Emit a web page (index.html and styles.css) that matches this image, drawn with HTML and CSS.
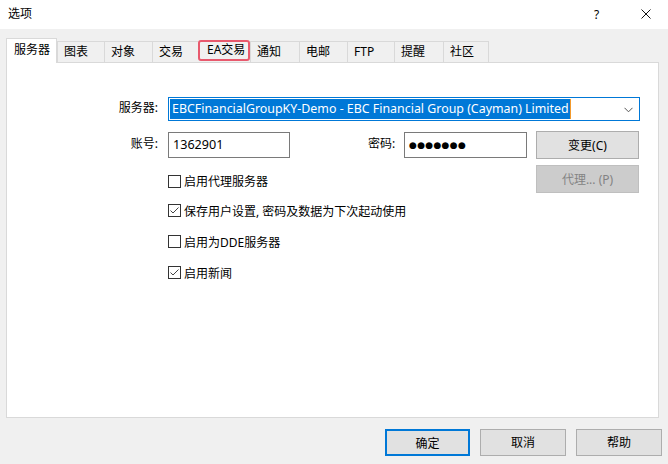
FILE: index.html
```html
<!DOCTYPE html>
<html lang="zh-CN">
<head>
<meta charset="utf-8">
<title>选项</title>
<link rel="stylesheet" href="styles.css">
</head>
<body>
<div class="window">
  <div class="titlebar">
    <span class="title">选项</span>
    <span class="help">?</span>
    <span class="close"><svg width="10" height="10" viewBox="0 0 10 10"><path d="M0.5 0.5 L9.5 9.5 M9.5 0.5 L0.5 9.5" stroke="#111" stroke-width="1" fill="none"/></svg></span>
  </div>
  <div class="tabs">
    <div class="tab tab-active t1">服务器</div>
    <div class="tab t2">图表</div>
    <div class="tab t3">对象</div>
    <div class="tab t4">交易</div>
    <div class="tab tab-mark t5">EA交易</div>
    <div class="tab t6">通知</div>
    <div class="tab t7">电邮</div>
    <div class="tab t8">FTP</div>
    <div class="tab t9">提醒</div>
    <div class="tab t10 tab-last">社区</div>
  </div>
  <div class="panel">
    <div class="form">
      <label class="lbl r1">服务器:</label>
      <div class="combo r1">
        <span class="sel">EBCFinancialGroupKY-Demo - EBC Financial Group (Cayman) Limited</span><span class="caret"></span>
        <svg class="chev" width="9" height="6" viewBox="0 0 9 6"><path d="M0.5 0.8 L4.5 4.8 L8.5 0.8" stroke="#555" stroke-width="1" fill="none"/></svg>
      </div>

      <label class="lbl r2">账号:</label>
      <div class="input r2 c-acct">1362901</div>
      <label class="lbl lbl-pw r2">密码:</label>
      <div class="input r2 c-pw"><span class="dots">●●●●●●●</span></div>
      <button class="btn r2 c-btn">变更(C)</button>

      <div class="check r3"><span class="box"></span>启用代理服务器</div>
      <button class="btn btn-disabled r3 c-btn">代理... (P)</button>

      <div class="check r4"><span class="box"><svg width="11" height="11" viewBox="0 0 11 11"><path d="M1.5 5.5 L4 8 L9.5 2.5" stroke="#444" stroke-width="1" fill="none"/></svg></span>保存用户设置, 密码及数据为下次起动使用</div>
      <div class="check r5"><span class="box"></span>启用为DDE服务器</div>
      <div class="check r6"><span class="box"><svg width="11" height="11" viewBox="0 0 11 11"><path d="M1.5 5.5 L4 8 L9.5 2.5" stroke="#444" stroke-width="1" fill="none"/></svg></span>启用新闻</div>
    </div>
  </div>
  <div class="footer">
    <button class="btn btn-default">确定</button>
    <button class="btn">取消</button>
    <button class="btn">帮助</button>
  </div>
</div>
</body>
</html>
```
FILE: styles.css
```css
* { box-sizing: border-box; }
html, body { margin: 0; padding: 0; }
body {
  width: 668px;
  height: 464px;
  background: #f0f0f0;
  font-family: "Noto Sans", "Noto Sans CJK SC", sans-serif;
  font-size: 12px;
  color: #000;
  overflow: hidden;
}
.window { width: 668px; height: 464px; }

.titlebar {
  height: 29px;
  background: #fff;
  display: flex;
  align-items: center;
  padding-left: 8px;
}
.title { flex: 1; line-height: 28px; margin-top: -1px; }
.help { width: 10px; margin-right: 37px; font-size: 12px; }
.close { width: 10px; height: 10px; margin-right: 17px; display: flex; margin-top: -1px; }

.tabs {
  display: flex;
  align-items: flex-end;
  padding-left: 6px;
  height: 33px;
}
.tab {
  height: 21px;
  line-height: 19px;
  padding-left: 6px;
  border-top: 1px solid #d9d9d9;
  border-left: 1px solid #d9d9d9;
  background: #f0f0f0;
  white-space: nowrap;
}
.tab-last { border-right: 1px solid #d9d9d9; }
.tab-active {
  height: 25px;
  margin-bottom: -1px;
  background: #fff;
  border-right: 1px solid #d9d9d9;
  padding-left: 7px;
  line-height: 21px;
  position: relative;
  z-index: 1;
}
.tab-mark {
  border: 2px solid #e8596d;
  border-radius: 3px;
  height: 21px;
  line-height: 16px;
  padding-left: 7px;
  margin-bottom: 1px;
}
.t1 { width: 51px; }
.t2 { width: 47px; }
.t3 { width: 48px; }
.t4 { width: 46px; }
.t5 { width: 52px; }
.t6 { width: 49px; }
.t7 { width: 48px; }
.t8 { width: 47px; }
.t9 { width: 49px; }
.t10 { width: 46px; }

.panel {
  margin-left: 6px;
  width: 653px;
  height: 356px;
  background: #fff;
  border: 1px solid #d9d9d9;
  padding-top: 34px;
}

.form {
  display: grid;
  grid-template-columns: 154px 7px 122px 79px 28px 7px 123px 9px 103px;
  grid-template-rows: 34px 34px 30px 31px 31px 31px;
}
.r1 { grid-row: 1; }
.r2 { grid-row: 2; }
.r3 { grid-row: 3; }
.r4 { grid-row: 4; }
.r5 { grid-row: 5; }
.r6 { grid-row: 6; }

.lbl {
  grid-column: 1;
  text-align: right;
  padding-right: 3px;
  align-self: start;
  line-height: 22px;
}
.r2.lbl { line-height: 26px; }
.lbl-pw { grid-column: 5 / span 2; text-align: left; padding-right: 0; margin-left: -1px; }

.combo {
  grid-column: 3 / span 7;
  margin-right: -1px;
  height: 24px;
  border: 1px solid #0078d7;
  background: #fff;
  padding: 1px;
  display: flex;
  align-items: stretch;
  align-self: start;
}
.sel {
  background: #0078d7;
  color: #fff;
  padding: 0 1px 0 2px;
  line-height: 20px;
  white-space: nowrap;
  font-size: 12.4px;
}
.caret { width: 1px; background: #f39a2c; }
.chev { margin-left: auto; margin-right: 5px; align-self: center; margin-top: 1px; }

.input {
  height: 26px;
  margin-top: 1px;
  border: 1px solid #7a7a7a;
  background: #fff;
  padding-left: 4px;
  line-height: 23px;
  align-self: start;
  font-size: 12.6px;
}
.c-acct { grid-column: 3; }
.c-pw { grid-column: 7; }
.dots {
  font-family: "DejaVu Sans", sans-serif;
  font-size: 9px;
  letter-spacing: 0.3px;
  vertical-align: middle;
}

.btn {
  font-family: inherit;
  font-size: 12px;
  color: #000;
  background: #e1e1e1;
  border: 1px solid #adadad;
  height: 27px;
  width: 86px;
  padding: 0;
  margin: 0;
  line-height: 25px;
}
.c-btn { grid-column: 9; width: 103px; align-self: start; }
.r2.c-btn { height: 28px; }
.btn-disabled {
  background: #cccccc;
  border-color: #bfbfbf;
  color: #838383;
  height: 28px;
}
.btn-default { border: 2px solid #0078d7; width: 85px; }

.check {
  grid-column: 3 / span 7;
  display: flex;
  align-items: center;
  white-space: nowrap;
  align-self: center;
}
.r3.check { align-self: start; margin-top: 7px; }
.box {
  width: 13px;
  height: 13px;
  border: 1px solid #333;
  background: #fff;
  margin-right: 3px;
  display: flex;
  flex: none;
}

.footer {
  display: flex;
  justify-content: flex-end;
  gap: 10px;
  padding-right: 6px;
  margin-top: 11px;
}
```
